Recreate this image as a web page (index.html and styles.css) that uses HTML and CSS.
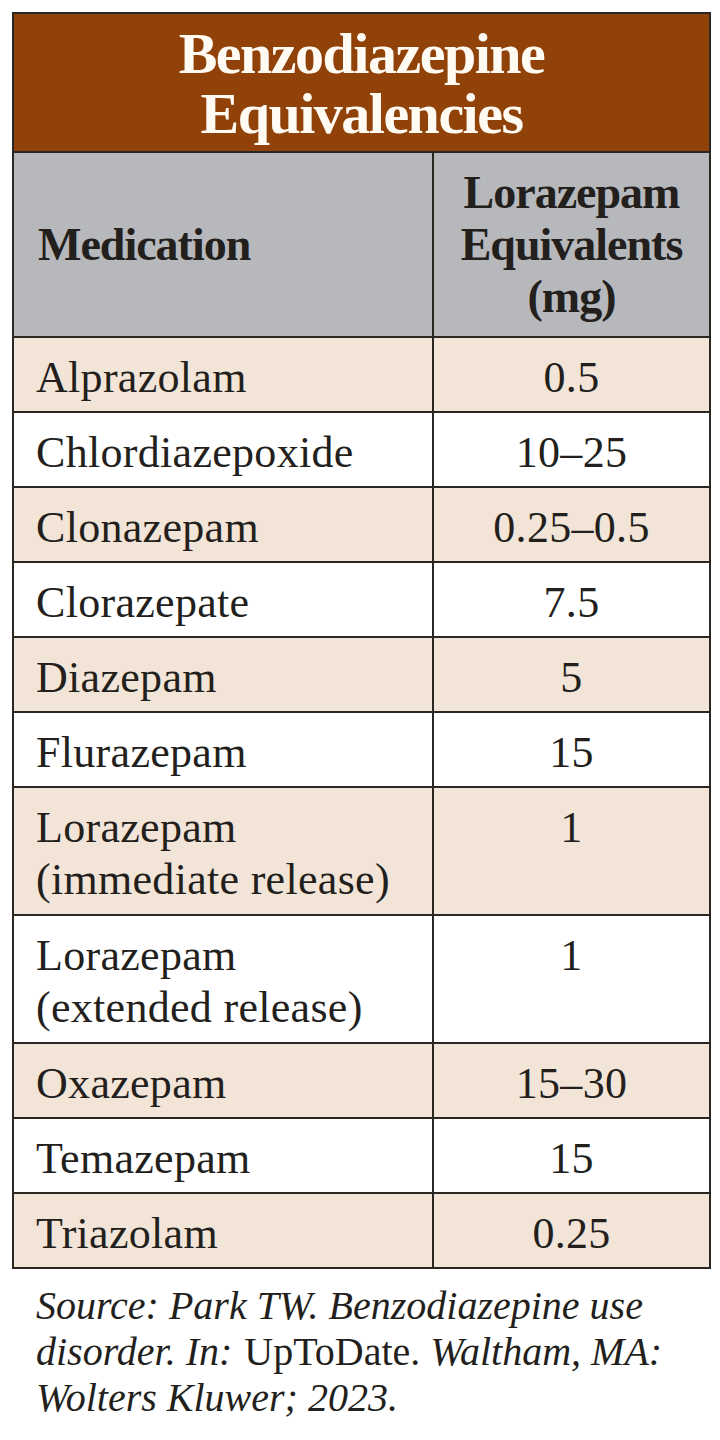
FILE: index.html
```html
<!DOCTYPE html>
<html lang="en">
<head>
<meta charset="utf-8">
<title>Benzodiazepine Equivalencies</title>
<link rel="stylesheet" href="styles.css">
</head>
<body>
<div class="page">
  <table class="equiv">
    <colgroup>
      <col class="col-med">
      <col class="col-dose">
    </colgroup>
    <thead>
      <tr class="title-row"><th colspan="2">Benzodiazepine<br>Equivalencies</th></tr>
      <tr class="head-row">
        <th class="c-med">Medication</th>
        <th class="c-dose">Lorazepam<br>Equivalents<br>(mg)</th>
      </tr>
    </thead>
    <tbody>
      <tr class="odd"><td>Alprazolam</td><td class="dose">0.5</td></tr>
      <tr><td>Chlordiazepoxide</td><td class="dose">10–25</td></tr>
      <tr class="odd"><td>Clonazepam</td><td class="dose">0.25–0.5</td></tr>
      <tr><td>Clorazepate</td><td class="dose">7.5</td></tr>
      <tr class="odd"><td>Diazepam</td><td class="dose">5</td></tr>
      <tr><td>Flurazepam</td><td class="dose">15</td></tr>
      <tr class="odd two-line"><td>Lorazepam<br>(immediate release)</td><td class="dose">1</td></tr>
      <tr class="two-line"><td>Lorazepam<br>(extended release)</td><td class="dose">1</td></tr>
      <tr class="odd"><td>Oxazepam</td><td class="dose">15–30</td></tr>
      <tr><td>Temazepam</td><td class="dose">15</td></tr>
      <tr class="odd"><td>Triazolam</td><td class="dose">0.25</td></tr>
    </tbody>
  </table>
  <p class="source">
    <span class="line"><em>Source: Park TW. Benzodiazepine use</em></span>
    <span class="line"><em>disorder. In:</em> <span class="roman">UpToDate.</span> <em>Waltham, MA:</em></span>
    <span class="line"><em>Wolters Kluwer; 2023.</em></span>
  </p>
</div>
</body>
</html>
```
FILE: styles.css
```css
html, body {
  margin: 0;
  padding: 0;
  background: #ffffff;
}
.page {
  width: 720px;
  padding: 12px 0 0 12px;
  box-sizing: border-box;
  font-family: "Liberation Serif", "Times New Roman", serif;
  color: #231f1c;
}
.equiv {
  border-collapse: collapse;
  width: 697px;
  table-layout: fixed;
  border: 2px solid #2a2622;
}
.col-med {
  width: 420px;
}
.col-dose {
  width: 277px;
}
.equiv th, .equiv td {
  border: 2px solid #2a2622;
  padding: 0;
}
.title-row th {
  background: #904209;
  color: #fffaf2;
  font-size: 58px;
  font-weight: bold;
  line-height: 60px;
  height: 135px;
  text-align: center;
  vertical-align: middle;
  letter-spacing: -1.5px;
  padding-top: 2px;
}
.head-row th {
  background: #b7b8bc;
  font-size: 46px;
  font-weight: bold;
  line-height: 52px;
  height: 183px;
  vertical-align: middle;
  letter-spacing: -1px;
}
.head-row .c-med {
  text-align: left;
  padding-left: 24px;
}
.head-row .c-dose {
  text-align: center;
}
.equiv td {
  font-size: 44px;
  line-height: 52px;
  padding: 14px 6px 7px 22px;
  vertical-align: top;
  background: #ffffff;
  letter-spacing: 0.3px;
}
.equiv tr.two-line td {
  padding-bottom: 8px;
}
.equiv tr.odd td {
  background: #f3e4d8;
}
.equiv td.dose {
  text-align: center;
  padding-left: 0;
  padding-right: 0;
}
.source {
  margin: 14px 0 0 24px;
  font-size: 40px;
  line-height: 46px;
  width: 670px;
}
.source .line {
  display: block;
  white-space: nowrap;
}
.source em {
  font-style: italic;
}
.source .roman {
  margin-left: 2px;
}
```
